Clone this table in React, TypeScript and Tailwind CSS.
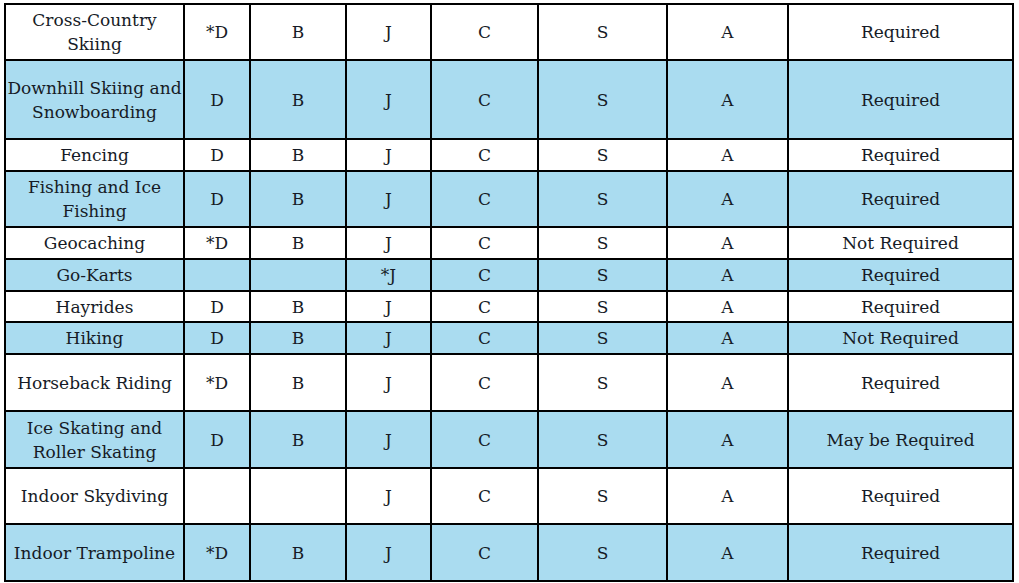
import React from 'react';

type Row = {
  activity: string[];
  d: string;
  b: string;
  j: string;
  permit: string;
  h: number;
  blue: boolean;
};

const ROWS: Row[] = [
  { activity: ['Cross-Country', 'Skiing'], d: '*D', b: 'B', j: 'J', permit: 'Required', h: 54, blue: false },
  { activity: ['Downhill Skiing and', 'Snowboarding'], d: 'D', b: 'B', j: 'J', permit: 'Required', h: 77, blue: true },
  { activity: ['Fencing'], d: 'D', b: 'B', j: 'J', permit: 'Required', h: 30, blue: false },
  { activity: ['Fishing and Ice', 'Fishing'], d: 'D', b: 'B', j: 'J', permit: 'Required', h: 54, blue: true },
  { activity: ['Geocaching'], d: '*D', b: 'B', j: 'J', permit: 'Not Required', h: 30, blue: false },
  { activity: ['Go-Karts'], d: '', b: '', j: '*J', permit: 'Required', h: 30, blue: true },
  { activity: ['Hayrides'], d: 'D', b: 'B', j: 'J', permit: 'Required', h: 29, blue: false },
  { activity: ['Hiking'], d: 'D', b: 'B', j: 'J', permit: 'Not Required', h: 30, blue: true },
  { activity: ['Horseback Riding'], d: '*D', b: 'B', j: 'J', permit: 'Required', h: 55, blue: false },
  { activity: ['Ice Skating and', 'Roller Skating'], d: 'D', b: 'B', j: 'J', permit: 'May be Required', h: 55, blue: true },
  { activity: ['Indoor Skydiving'], d: '', b: '', j: 'J', permit: 'Required', h: 54, blue: false },
  { activity: ['Indoor Trampoline'], d: '*D', b: 'B', j: 'J', permit: 'Required', h: 55, blue: true },
];

const Cell: React.FC<{ blue: boolean; h: number; children?: React.ReactNode }> = ({ blue, h, children }) => (
  <div
    className={`flex flex-col items-center justify-center text-center whitespace-nowrap ${blue ? 'bg-[#aadcf0]' : 'bg-white'}`}
    style={{ height: h }}
  >
    {children}
  </div>
);

export default function App() {
  return (
    <div className="w-[1019px] h-[583px] bg-white overflow-hidden pt-[3px] pl-[4px] font-['DejaVu_Serif',serif] text-[17px] leading-[24px] text-[#161b26]">
      <div className="inline-grid grid-cols-[177px_64px_94px_83px_105px_127px_119px_223px] gap-[2px] p-[2px] bg-black">
        {ROWS.map((r, i) => (
          <React.Fragment key={i}>
            <Cell blue={r.blue} h={r.h}>
              {r.activity.map((line) => (
                <span key={line}>{line}</span>
              ))}
            </Cell>
            <Cell blue={r.blue} h={r.h}>{r.d}</Cell>
            <Cell blue={r.blue} h={r.h}>{r.b}</Cell>
            <Cell blue={r.blue} h={r.h}>{r.j}</Cell>
            <Cell blue={r.blue} h={r.h}>C</Cell>
            <Cell blue={r.blue} h={r.h}>S</Cell>
            <Cell blue={r.blue} h={r.h}>A</Cell>
            <Cell blue={r.blue} h={r.h}>{r.permit}</Cell>
          </React.Fragment>
        ))}
      </div>
    </div>
  );
}
